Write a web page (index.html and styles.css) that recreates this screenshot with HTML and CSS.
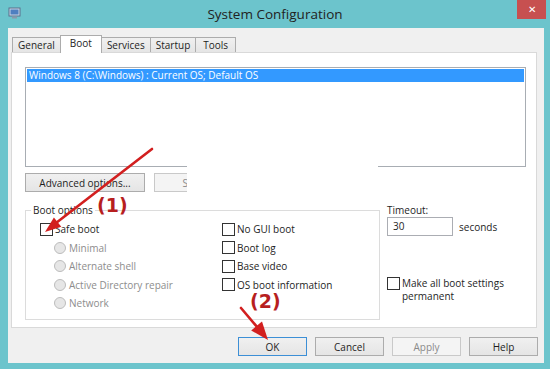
FILE: index.html
```html
<!DOCTYPE html>
<html lang="en">
<head>
    <meta charset="UTF-8">
    <title>System Configuration</title>
    <link rel="stylesheet" href="styles.css">
</head>
<body>
<div class="window">
    <div class="titlebar">
        <svg class="app-icon" width="13" height="12" viewBox="0 0 13 12">
            <rect x="1" y="1" width="11" height="8" fill="#c9d6e6" stroke="#5b6f8c"/>
            <rect x="2.5" y="2.5" width="8" height="5" fill="#4f7fc0"/>
            <rect x="4" y="9.5" width="5" height="2" fill="#8a98ab"/>
        </svg>
        <div class="title">System Configuration</div>
        <div class="close">&#x2715;</div>
    </div>

    <div class="client">
        <div class="tabs">
            <div class="tab">General</div>
            <div class="tab active">Boot</div>
            <div class="tab">Services</div>
            <div class="tab">Startup</div>
            <div class="tab">Tools</div>
        </div>

        <div class="panel">
            <div class="listbox">
                <div class="item selected">Windows 8 (C:\Windows) : Current OS; Default OS</div>
            </div>

            <div class="btn-row">
                <button class="btn wide">Advanced options...</button>
                <button class="btn wide" disabled>Set as default</button>
            </div>

            <div class="lower">
                <fieldset class="group">
                    <legend>Boot options</legend>
                    <div class="cols">
                        <div class="col left">
                            <div class="row"><span class="box"></span>Safe boot</div>
                            <div class="row sub off"><span class="dot"></span>Minimal</div>
                            <div class="row sub off"><span class="dot"></span>Alternate shell</div>
                            <div class="row sub off"><span class="dot"></span>Active Directory repair</div>
                            <div class="row sub off"><span class="dot"></span>Network</div>
                        </div>
                        <div class="col">
                            <div class="row"><span class="box"></span>No GUI boot</div>
                            <div class="row"><span class="box"></span>Boot log</div>
                            <div class="row"><span class="box"></span>Base video</div>
                            <div class="row"><span class="box"></span>OS boot information</div>
                        </div>
                    </div>
                </fieldset>

                <div class="side">
                    <div class="label">Timeout:</div>
                    <div class="timeout">
                        <div class="input">30</div>
                        <span>seconds</span>
                    </div>
                    <div class="perm">
                        <span class="box"></span>
                        <span>Make all boot settings<br>permanent</span>
                    </div>
                </div>
            </div>
        </div>

        <div class="footer">
            <button class="btn default">OK</button>
            <button class="btn">Cancel</button>
            <button class="btn" disabled>Apply</button>
            <button class="btn">Help</button>
        </div>
    </div>

    <!-- annotations drawn over the screenshot -->
    <div class="erase"></div>
    <svg class="marks" width="550" height="369" viewBox="0 0 550 369">
        <line x1="152" y1="149" x2="56" y2="223" stroke="#d21f1f" stroke-width="2.6" stroke-linecap="round"/>
        <polygon points="45,232 61.3,226.8 53.9,217.4" fill="#d21f1f"/>
        <line x1="241" y1="308" x2="258" y2="328" stroke="#d21f1f" stroke-width="2.6" stroke-linecap="round"/>
        <polygon points="268,340 262,321.6 251.2,330.4" fill="#d21f1f"/>
    </svg>
    <div class="note n1">(1)</div>
    <div class="note n2">(2)</div>
</div>
</body>
</html>
```

FILE: styles.css
```css
* {
    box-sizing: border-box;
}

body {
    margin: 0;
    font-family: "Open Sans", "Noto Sans", sans-serif;
    font-size: 10px;
    color: #1e1e1e;
}

.window {
    position: relative;
    width: 550px;
    height: 369px;
    background: #6cc4cc;
    padding: 0 6px 6px 8px;
    display: flex;
    flex-direction: column;
    overflow: hidden;
}

.titlebar {
    height: 28px;
    display: flex;
    align-items: flex-start;
    position: relative;
}

.app-icon {
    margin-top: 7px;
}

.title {
    flex: 1;
    text-align: center;
    font-size: 13.5px;
    line-height: 28px;
    color: #222;
    padding-left: 12px;
}

.close {
    width: 29px;
    height: 19px;
    background: #c75050;
    color: #fff;
    font-size: 10px;
    line-height: 19px;
    text-align: center;
    margin-right: -2px;
}

.client {
    flex: 1;
    background: #f0f0f0;
    padding: 7px 7px 0 3px;
    display: flex;
    flex-direction: column;
}

.tabs {
    display: flex;
    height: 17px;
    padding-left: 1px;
    align-items: flex-end;
    position: relative;
    z-index: 1;
}

.tab {
    height: 15px;
    line-height: 14px;
    padding: 0 5px;
    border: 1px solid #acacac;
    border-bottom: none;
    border-right: none;
    background: linear-gradient(#f0f0f0, #e5e5e5);
}

.tab:last-child {
    border-right: 1px solid #acacac;
    padding: 0 7px;
}

.tab.active {
    height: 18px;
    margin-bottom: -1px;
    background: #fff;
    border-right: 1px solid #acacac;
    padding: 0 9px;
    line-height: 14px;
}

.tab.active + .tab {
    border-left: none;
}

.panel {
    height: 276px;
    background: #fff;
    border: 1px solid #d9d9d9;
    padding: 14px 10px 0 13px;
}

.listbox {
    height: 100px;
    border: 1px solid #a8adb3;
    padding: 1px;
}

.item {
    height: 13px;
    line-height: 13px;
    padding-left: 2px;
}

.item.selected {
    background: #3399ff;
    color: #fff;
}

.btn-row {
    display: flex;
    gap: 9px;
    margin-top: 6px;
}

.btn {
    height: 19px;
    width: 69px;
    font: inherit;
    color: #1e1e1e;
    border: 1px solid #acacac;
    background: linear-gradient(#f0f0f0, #e5e5e5);
    padding: 0;
}

.btn.wide {
    width: 120px;
}

.btn:disabled {
    background: #f4f4f4;
    border-color: #c9c9c9;
    color: #8a8a8a;
}

.btn.default {
    border-color: #3c8fd6;
}

.lower {
    display: flex;
    gap: 7px;
    margin-top: 11px;
}

.group {
    width: 355px;
    height: 117px;
    margin: 0;
    border: 1px solid #dcdcdc;
    padding: 3px 0 0 14px;
}

.group legend {
    margin-left: -9px;
    padding: 0 2px;
    line-height: 14px;
}

.cols {
    display: flex;
}

.col.left {
    width: 182px;
}

.row {
    height: 18.5px;
    display: flex;
    align-items: center;
}

.row.sub {
    padding-left: 14px;
}

.row.off {
    color: #8d8d8d;
}

.box {
    width: 13px;
    height: 13px;
    border: 1px solid #333;
    background: #fff;
    margin-right: 2px;
    flex: none;
}

.dot {
    width: 12px;
    height: 12px;
    border-radius: 50%;
    border: 1px solid #bcbcbc;
    background: #e6e6e6;
    margin-right: 3px;
}

.side {
    padding-top: 1px;
}

.label {
    line-height: 12px;
}

.timeout {
    display: flex;
    align-items: center;
    gap: 6px;
    margin-top: 1px;
}

.input {
    width: 66px;
    height: 19px;
    border: 1px solid #abadb3;
    line-height: 17px;
    padding-left: 5px;
}

.perm {
    display: flex;
    align-items: flex-start;
    margin-top: 41px;
    line-height: 13px;
}

.footer {
    display: flex;
    justify-content: flex-end;
    gap: 8px;
    padding: 9px 6px 0 0;
    margin-right: -7px;
}

/* screenshot annotations */
.erase {
    position: absolute;
    left: 187px;
    top: 150px;
    width: 191px;
    height: 44px;
    background: #fff;
}

.marks {
    position: absolute;
    left: 0;
    top: 0;
}

.note {
    position: absolute;
    font-family: "DejaVu Sans", sans-serif;
    font-weight: bold;
    font-size: 19px;
    line-height: 22px;
    color: #b71f1f;
}

.n1 {
    left: 97px;
    top: 194px;
}

.n2 {
    left: 250px;
    top: 290px;
}
```
